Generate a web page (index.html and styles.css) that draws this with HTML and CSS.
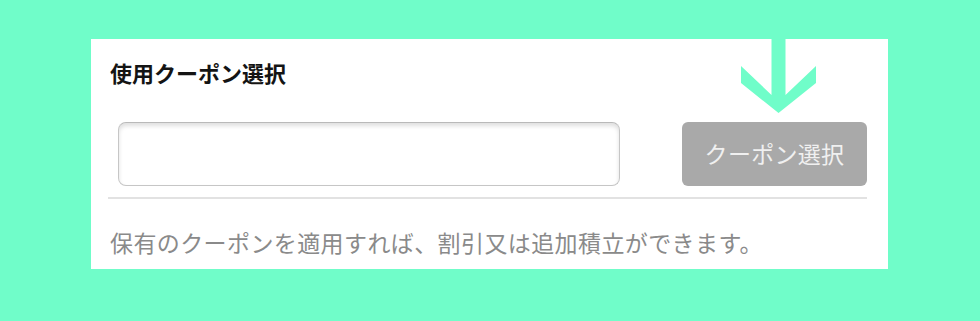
FILE: index.html
```html
<!DOCTYPE html>
<html lang="ja">
<head>
<meta charset="utf-8">
<link rel="stylesheet" href="styles.css">
</head>
<body>
<div class="panel">
  <h2 class="title">使用クーポン選択</h2>
  <div class="row">
    <div class="input"></div>
    <div class="btn">クーポン選択</div>
  </div>
  <div class="sep"></div>
  <p class="note">保有のクーポンを適用すれば、割引又は追加積立ができます。</p>
  <svg class="arrow" width="76" height="75" viewBox="0 0 76 75">
    <polygon points="0,27 30.5,56 30.5,0 44.5,0 44.5,56 75,27 75,44 37.5,74 0,44" fill="#70fdc9"/>
  </svg>
</div>
</body>
</html>
```
FILE: styles.css
```css
html, body {
  margin: 0;
  background: #70fdc9;
}
body {
  width: 980px;
  height: 321px;
  overflow: hidden;
  font-family: "Noto Sans CJK JP", "Noto Sans", sans-serif;
}
.panel {
  position: relative;
  box-sizing: border-box;
  width: 797px;
  height: 230px;
  margin: 39px 0 0 91px;
  padding: 22px 21px 0 19px;
  background: #ffffff;
}
.title {
  margin: 0;
  font-size: 22px;
  line-height: 22px;
  font-weight: 700;
  color: #141414;
}
.row {
  display: flex;
  gap: 62px;
  margin: 39px 0 0 8px;
  height: 64px;
}
.input {
  box-sizing: border-box;
  width: 502px;
  height: 64px;
  border: 1px solid #c6c6c6;
  border-top-color: #b9b9b9;
  border-radius: 8px;
  box-shadow: inset 0 3px 4px rgba(0, 0, 0, 0.13);
  background: #fff;
}
.btn {
  width: 185px;
  height: 64px;
  display: flex;
  align-items: center;
  justify-content: center;
  padding-bottom: 3px;
  box-sizing: border-box;
  background: #a9a9a9;
  border-radius: 6px;
  color: #f0f0f0;
  font-size: 23px;
  letter-spacing: 0.3px;
}
.sep {
  margin: 11px 0 0 -2px;
  height: 2px;
  background: #e2e2e2;
}
.note {
  margin: 32px 0 0;
  font-size: 23px;
  line-height: 23px;
  letter-spacing: 0.4px;
  color: #8a8a8a;
}
.arrow {
  position: absolute;
  left: 650px;
  top: 0;
}
```
